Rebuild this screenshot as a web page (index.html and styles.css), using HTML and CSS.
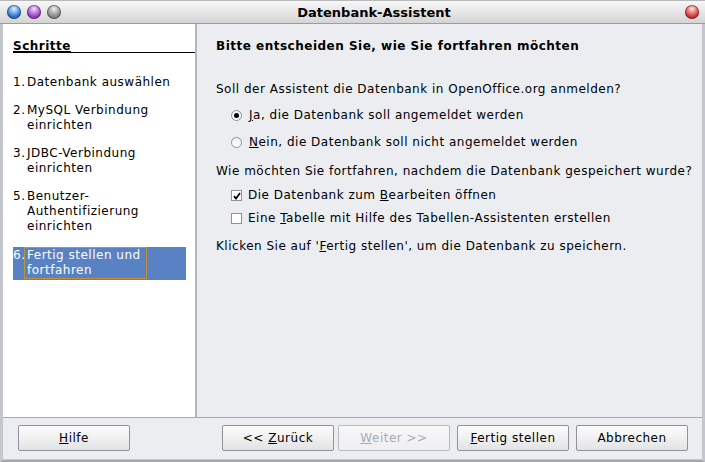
FILE: index.html
```html
<!DOCTYPE html>
<html lang="de">
<head>
<meta charset="utf-8">
<title>Datenbank-Assistent</title>
<link rel="stylesheet" href="styles.css">
</head>
<body>
<div class="window">
  <div class="titlebar">
    <div class="lights">
      <span class="light blue"></span>
      <span class="light purple"></span>
      <span class="light grey"></span>
    </div>
    <div class="title">Datenbank-Assistent</div>
    <div class="lights right">
      <span class="light red"></span>
    </div>
  </div>
  <div class="frame">
    <div class="main">
      <aside class="steps">
        <div class="steps-head">Schritte</div>
        <ol class="step-list">
          <li class="step"><span class="num">1.</span><span class="label">Datenbank auswählen</span></li>
          <li class="step"><span class="num">2.</span><span class="label">MySQL Verbindung einrichten</span></li>
          <li class="step"><span class="num">3.</span><span class="label">JDBC-Verbindung einrichten</span></li>
          <li class="step"><span class="num">5.</span><span class="label">Benutzer-<br>Authentifizierung einrichten</span></li>
          <li class="step active"><span class="num">6.</span><span class="label focus">Fertig stellen und fortfahren</span></li>
        </ol>
      </aside>
      <section class="content">
        <h1 class="heading">Bitte entscheiden Sie, wie Sie fortfahren möchten</h1>
        <p class="q q1">Soll der Assistent die Datenbank in OpenOffice.org anmelden?</p>
        <div class="opt opt-r1"><span class="radio on"></span><span><u>J</u>a, die Datenbank soll angemeldet werden</span></div>
        <div class="opt opt-r2"><span class="radio"></span><span><u>N</u>ein, die Datenbank soll nicht angemeldet werden</span></div>
        <p class="q q2">Wie möchten Sie fortfahren, nachdem die Datenbank gespeichert wurde?</p>
        <div class="opt opt-c1"><span class="check"><svg width="8" height="8" viewBox="0 0 8 8"><path d="M1 4.2 L3 6.5 L7 1" fill="none" stroke="#000" stroke-width="1.8"/></svg></span><span>Die Datenbank zum <u>B</u>earbeiten öffnen</span></div>
        <div class="opt opt-c2"><span class="check"></span><span>Eine <u>T</u>abelle mit Hilfe des Tabellen-Assistenten erstellen</span></div>
        <p class="q q3">Klicken Sie auf '<u>F</u>ertig stellen', um die Datenbank zu speichern.</p>
      </section>
    </div>
    <div class="footer">
      <button class="btn"><u>H</u>ilfe</button>
      <div class="nav">
        <button class="btn">&lt;&lt; <u>Z</u>urück</button>
        <button class="btn disabled"><u>W</u>eiter &gt;&gt;</button>
        <button class="btn wide-gap"><u>F</u>ertig stellen</button>
        <button class="btn wide-gap">Abbrechen</button>
      </div>
    </div>
  </div>
</div>
</body>
</html>
```

FILE: styles.css
```css
* { box-sizing: border-box; }
html, body { margin: 0; padding: 0; }
body {
  width: 705px;
  height: 462px;
  overflow: hidden;
  font-family: "DejaVu Sans", "Liberation Sans", sans-serif;
  font-size: 12px;
  letter-spacing: 0.5px;
  color: #000;
  background: #ecedf1;
}
.window {
  width: 705px;
  height: 462px;
  display: flex;
  flex-direction: column;
}
.titlebar {
  height: 24px;
  flex: none;
  display: flex;
  align-items: center;
  background: linear-gradient(#f7f7f7, #e6e6e6 50%, #d4d4d4);
  border-bottom: 1px solid #9c9c9c;
  border-top: 1px solid #b8b8b8;
  padding: 0 6px 0 7px;
  letter-spacing: 0;
}
.lights { display: flex; gap: 6px; }
.light {
  width: 14px;
  height: 14px;
  border-radius: 50%;
  display: block;
  box-shadow: inset 0 0 0 1px rgba(0,0,0,0.35);
}
.light.blue { background: radial-gradient(circle at 50% 28%, #e6f2ff 0, #8ec0f0 25%, #2f78c8 60%, #1b5aa6 100%); }
.light.purple { background: radial-gradient(circle at 50% 28%, #f6e6ff 0, #cf98ea 25%, #9c43c3 60%, #76289c 100%); }
.light.grey { background: radial-gradient(circle at 50% 28%, #f4f4f4 0, #c2c2c2 25%, #8a8a8a 60%, #666 100%); }
.light.red { background: radial-gradient(circle at 50% 28%, #ffe8e8 0, #f19a9a 25%, #d63a3a 60%, #a81f1f 100%); }
.title {
  flex: 1;
  text-align: center;
  font-weight: bold;
  font-size: 13px;
  padding-left: 2px;
}
.frame {
  flex: 1;
  display: flex;
  flex-direction: column;
  border-left: 3px solid #c3c6cc;
  border-right: 3px solid #c3c6cc;
  border-bottom: 2px solid #a3a6ac;
  box-shadow: inset 0 -1px 0 #c3c6cc;
}
.main {
  height: 394px;
  display: flex;
  border-bottom: 1px solid #a6a9ae;
}
.steps {
  width: 194px;
  flex: none;
  background: #fff;
  border-right: 2px solid #b3b6bb;
  padding-top: 16px;
}
.steps-head {
  margin-left: 10px;
  font-weight: bold;
  text-decoration: underline;
  line-height: 12px;
  border-bottom: 1px solid #000;
  font-size: 12px;
}
.step-list {
  list-style: none;
  margin: 22px 0 0 10px;
  padding: 0;
  width: 173px;
}
.step {
  display: flex;
  align-items: flex-start;
  line-height: 15px;
  margin-bottom: 13px;
}
.step .num { width: 12px; flex: none; }
.step .label { padding-left: 2px; }
.step.active {
  background: #5882c4;
  color: #fff;
  padding: 1px 0 2px;
}
.focus {
  outline: 1px solid #c4903a;
  width: 121px;
  flex: none;
}
.content {
  flex: 1;
  padding: 15px 0 0 19px;
}
.heading {
  margin: 0;
  font-size: 12px;
  font-weight: bold;
  line-height: 15px;
}
.q { margin: 0; line-height: 15px; }
.q1 { margin-top: 28px; }
.q2 { margin-top: 14px; }
.q3 { margin-top: 13px; }
.opt {
  display: flex;
  align-items: center;
  line-height: 15px;
  margin-left: 15px;
}
.opt-r1 { margin-top: 11px; }
.opt-r2 { margin-top: 12px; }
.opt-c1 { margin-top: 9px; }
.opt-c2 { margin-top: 8px; }
.radio {
  width: 11px;
  height: 11px;
  border-radius: 50%;
  border: 1px solid #8e9197;
  background: linear-gradient(#f0f0f0, #fff);
  margin-right: 7px;
  display: flex;
  align-items: center;
  justify-content: center;
}
.radio.on::after {
  content: "";
  width: 5px;
  height: 5px;
  border-radius: 50%;
  background: #000;
}
.check {
  width: 11px;
  height: 11px;
  border: 1px solid #8e9197;
  background: #fff;
  margin-right: 6px;
  display: flex;
  align-items: center;
  justify-content: center;
}
.check svg { display: block; }
.footer {
  flex: 1;
  display: flex;
  justify-content: space-between;
  align-items: flex-start;
  padding: 7px 14px 0 15px;
}
.nav { display: flex; gap: 4px; }
.btn {
  width: 112px;
  height: 26px;
  font-family: inherit;
  font-size: 12px;
  letter-spacing: 0.5px;
  color: #000;
  background: linear-gradient(#fcfcfc, #f0f0f0 50%, #e2e3e6);
  border: 1px solid #8f9298;
  border-radius: 2px;
  padding: 0;
}
.btn.disabled {
  color: #a9abb0;
  border-color: #b9bbc0;
  background: linear-gradient(#f8f8f9, #eeeff1);
}
.btn.wide-gap { margin-left: 3px; }
```
